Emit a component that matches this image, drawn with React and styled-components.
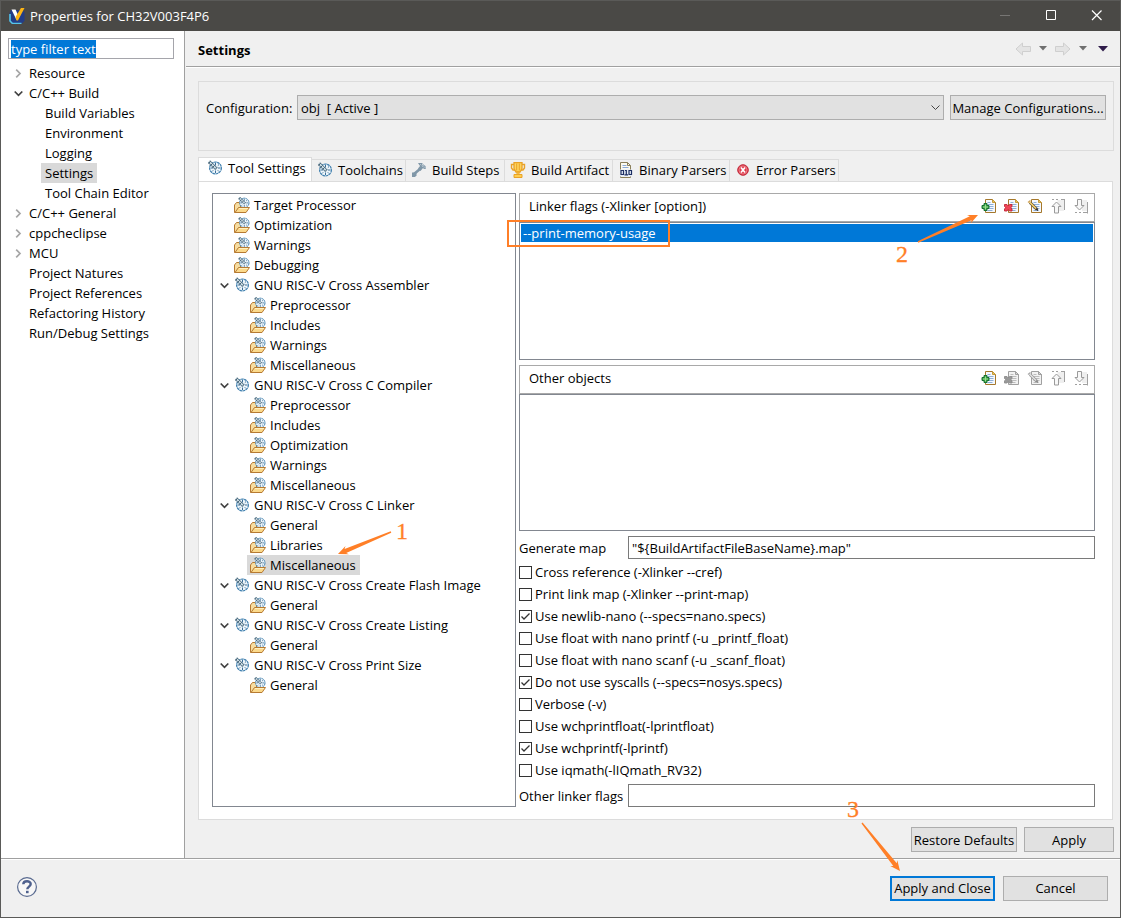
import React, { useEffect, useRef } from "react";
import styled, { createGlobalStyle, css } from "styled-components";

const Global = createGlobalStyle`
  * { box-sizing: border-box; }
  body { margin: 0; background: #f0f0f0; }
  body, button, input, select {
    font-family: "Open Sans", "Noto Sans", "Noto Sans CJK SC", sans-serif;
    font-size: 13px;
    line-height: 20px;
    color: #000;
  }
  ul { list-style: none; margin: 0; padding: 0; }
`;

const Window = styled.div`
  display: flex;
  flex-direction: column;
  min-height: 100vh;
  border: 1px solid #5a5a58;
  background: #f0f0f0;
`;

const TitleBar = styled.header`
  display: flex;
  align-items: center;
  height: 30px;
  padding: 0 15px 0 8px;
  background: #4a4946;
  color: #fff;
`;
const WindowTitle = styled.span`
  flex: 1;
  margin-left: 5px;
`;
const WindowButtons = styled.div`
  display: flex;
  gap: 30px;
`;
const IconButton = styled.button`
  display: flex;
  padding: 0;
  border: 0;
  background: none;
`;

const Columns = styled.div`
  display: flex;
  flex: 1;
`;
const Sidebar = styled.nav`
  flex: 0 0 184px;
  padding: 7px 10px 0 7px;
  border-right: 1px solid #a0a0a0;
  background: #fff;
`;
const FilterInput = styled.input`
  display: block;
  width: 100%;
  height: 21px;
  margin-bottom: 4px;
  padding: 0 2px;
  border: 1px solid #a5a5ab;
  line-height: 17px;
  outline: 0;
  &::selection { background: #0078d7; color: #fff; }
`;

const Row = styled.li`
  display: flex;
  align-items: center;
  height: 20px;
  padding-left: ${(p) => p.$indent}px;
  white-space: nowrap;
`;
const Twisty = styled.span`
  display: flex;
  flex: 0 0 ${(p) => p.$width}px;
`;
const RowLabel = styled.span`
  display: flex;
  align-items: center;
  gap: 4px;
  height: 20px;
  padding: 0 4px 0 ${(p) => (p.$icon ? 3 : 4)}px;
  background: ${(p) => (p.$selected ? "#d9d9d9" : "transparent")};
`;

const Main = styled.main`
  display: flex;
  flex: 1;
  flex-direction: column;
  min-width: 0;
`;
const PageHeader = styled.div`
  display: flex;
  align-items: center;
  justify-content: space-between;
  height: 36px;
  padding: 0 11px 0 12px;
  border-bottom: 1px solid #a0a0a0;
  margin-left: 1px;
  box-shadow: 0 1px 0 #fff;
`;
const PageTitle = styled.h1`
  margin: 2px 0 0;
  font-size: 13px;
  line-height: 20px;
`;
const History = styled.div`
  display: flex;
  align-items: center;
  gap: 8px;
`;
const Content = styled.div`
  display: flex;
  flex: 1;
  flex-direction: column;
  padding: 14px 6px 6px 13px;
`;
const ConfigBox = styled.section`
  display: flex;
  align-items: flex-start;
  height: 70px;
  padding: 13px 7px 0 7px;
  border: 1px solid #dcdcdc;
`;
const ConfigLabel = styled.label`
  flex: 0 0 91px;
  margin-top: 3px;
`;
const SelectWrap = styled.div`
  position: relative;
  flex: 1;
  margin-right: 6px;
`;
const Select = styled.select`
  appearance: none;
  display: block;
  width: 100%;
  height: 25px;
  padding: 0 24px 0 3px;
  border: 1px solid #adadad;
  border-radius: 0;
  background: #e1e1e1;
`;
const SelectArrow = styled.span`
  position: absolute;
  top: 9px;
  right: 4px;
  display: flex;
  pointer-events: none;
`;
const Button = styled.button`
  width: ${(p) => p.$width}px;
  height: 25px;
  padding: 0;
  border: ${(p) => (p.$primary ? "2px solid #0078d7" : "1px solid #adadad")};
  background: #e1e1e1;
  line-height: 20px;
  white-space: nowrap;
`;

const Tabs = styled.div`
  display: flex;
  align-items: flex-end;
  height: 25px;
  margin-top: 6px;
`;
const Tab = styled.button`
  display: flex;
  align-items: center;
  gap: 5px;
  width: ${(p) => p.$width}px;
  height: 23px;
  padding: 0 0 1px 5px;
  border: 1px solid #dcdcdc;
  border-left: 0;
  background: #f0f0f0;
  white-space: nowrap;
  ${(p) =>
    p.$active &&
    css`
      height: 25px;
      padding: 0 0 3px 8px;
      border-left: 1px solid #dcdcdc;
      border-bottom-color: #fff;
      background: #fff;
    `}
`;
const TabPanel = styled.section`
  display: flex;
  flex: 1;
  gap: 3px;
  margin: -1px 1px 7px 0;
  padding: 11px 17px 12px 13px;
  border: 1px solid #dcdcdc;
  background: #fff;
`;
const ToolTree = styled.ul`
  position: relative;
  flex: 0 0 304px;
  && { padding: 1px 0 0 7px; }
  border: 1px solid #828790;
`;
const Options = styled.div`
  display: flex;
  flex: 1;
  flex-direction: column;
  min-width: 0;
`;
const ListHeader = styled.div`
  display: flex;
  align-items: center;
  justify-content: space-between;
  height: 29px;
  padding: 0 5px 4px 9px;
  border: 1px solid #a9a9a9;
  border-bottom: 0;
`;
const Toolbar = styled.div`
  display: flex;
  gap: 7px;
`;
const ListBox = styled.ul`
  position: relative;
  flex: 1 1 137px;
  && { padding: 1px; margin-bottom: 5px; }
  border: 1px solid #828790;
  box-shadow: 0 -1px 0 #a9a9a9;
`;
const ListItem = styled.li`
  height: 18px;
  padding-left: 2px;
  line-height: 18px;
  background: #0078d7;
  color: #fff;
`;
const Field = styled.div`
  display: flex;
  align-items: center;
  label { flex: 0 0 109px; }
`;
const TextInput = styled.input`
  flex: 1;
  min-width: 0;
  height: 23px;
  padding: 0 3px;
  border: 1px solid #7a7a7a;
  outline: 0;
`;
const Checks = styled.div`
  display: flex;
  flex-direction: column;
  margin: 2px 0 3px;
`;
const CheckLabel = styled.label`
  display: flex;
  align-items: center;
  gap: 3px;
  height: 22px;
`;
const tick = encodeURIComponent(
  '<svg xmlns="http://www.w3.org/2000/svg" width="11" height="11"><path d="M1.5 5.5l2.5 2.5 5.500-5.500" fill="none" stroke="#333" stroke-width="1.300"/></svg>'
);
const CheckBox = styled.input`
  appearance: none;
  width: 13px;
  height: 13px;
  margin: 0;
  border: 1px solid #333;
  background: #fff;
  &:checked { background-image: url("data:image/svg+xml,${tick}"); }
`;

const PageActions = styled.div`
  display: flex;
  justify-content: flex-end;
  gap: 7px;
`;
const Footer = styled.footer`
  display: flex;
  align-items: center;
  gap: 8px;
  height: 59px;
  padding: 0 12px 0 15px;
  border-top: 1px solid #a0a0a0;
  box-shadow: inset 0 1px 0 #fff;
`;
const HelpButton = styled(IconButton)`
  margin-right: auto;
`;
const FooterButton = styled.div`
  position: relative;
  display: flex;
`;

const Callout = styled.div`
  position: absolute;
  z-index: 2;
  left: ${(p) => p.$x}px;
  top: ${(p) => p.$y}px;
  ${(p) => p.$right !== undefined && css`left: auto; right: ${p.$right}px;`}
  width: ${(p) => p.$w}px;
  height: ${(p) => p.$h}px;
  pointer-events: none;
  svg { position: absolute; inset: 0; }
`;
const CalloutNumber = styled.span`
  position: absolute;
  left: ${(p) => p.$x}px;
  top: ${(p) => p.$y}px;
  color: #ff7f27;
  font: 24px/24px "Liberation Serif", serif;
  -webkit-text-stroke: 0.3px #ff7f27;
`;
const Highlight = styled.div`
  position: absolute;
  left: -13px;
  top: -3px;
  width: 163px;
  height: 27px;
  border: 2px solid #ff7f27;
  pointer-events: none;
`;

const Arrow = ({ w, h, from, to }) => {
  const dx = to[0] - from[0];
  const dy = to[1] - from[1];
  const len = Math.hypot(dx, dy);
  const u = [dx / len, dy / len];
  const p = (back, side) =>
    `${to[0] - u[0] * back - u[1] * side},${to[1] - u[1] * back + u[0] * side}`;
  return (
    <svg width={w} height={h} aria-hidden="true">
      <polygon
        fill="#ff7f27"
        points={[p(0, 0), p(10, 4.5), p(8, 2.2), p(len, 0.7), p(len, -0.7), p(8, -2.2), p(10, -4.5)].join(" ")}
      />
    </svg>
  );
};

const Svg = ({ children, w = 16, h = 16 }) => (
  <svg width={w} height={h} viewBox={`0 0 ${w} ${h}`} fill="none" aria-hidden="true">
    {children}
  </svg>
);

const DialShape = () => (
  <>
    <circle cx="8.500" cy="8" r="5.900" fill="#eef6fb" stroke="#3f7fae" strokeWidth="1.200" strokeDasharray="2.700 .5" />
    <path d="M8.500 3v2.500M13.500 8h-2.500M8.500 13v-2.500M3.500 8h2.500M12 4.500l-1.200 1.200M5 11.500l1.200-1.200M12 11.500l-1.200-1.200" stroke="#3c6f98" />
    <path d="M2 1.500l7.500 7.500" stroke="#5f7f92" strokeWidth="3.200" />
    <path d="M2.300 1.800L9.500 9" stroke="#dceaf0" strokeWidth="1.300" />
    <path d="M3.500 1.500l-2 2M5.500 3.500l-2 2M7.500 5.500l-2 2M8.500 9l1.500-1.500" stroke="#2d475a" strokeWidth=".8" />
  </>
);
const DialIcon = () => <Svg><DialShape /></Svg>;
const FolderIcon = () => (
  <Svg>
    <path d="M.5 15.500V8l2-2.500h3l1 1.500v4L3 15.500z" fill="#f7dda0" stroke="#b67a32" />
    <g transform="translate(3.500 -.5) scale(.8)"><DialShape /></g>
    <path d="M1 15.500l3.500-5h11l-3.500 5z" fill="#fbd98b" stroke="#b67a32" />
    <path d="M5 11.500h9" stroke="#fff0bd" />
  </Svg>
);
const HammerIcon = () => (
  <Svg>
    <path d="M3 12l6-5" stroke="#8097a8" strokeWidth="2.600" />
    <path d="M1 10.500h4.500v3L4 15H1z" fill="#8097a8" />
    <path d="M7 1h4l1.500 1.500L15 4.500V7h-2l-1-1-2.500 3L7 6.500 9 4z" fill="#8097a8" />
    <path d="M9.500 2.500l5 4M11 2l4 3.500" stroke="#e9eef1" strokeDasharray="1 1" />
  </Svg>
);
const TrophyIcon = () => (
  <Svg>
    <path d="M4 2.500H1.500V6l1.500 2h2M12 2.500h2.500V6L13 8h-2" stroke="#e9a227" strokeWidth="1.400" />
    <path d="M4 .7h8v6L10 10H6L4 6.700z" fill="#ffd45c" stroke="#e9a227" strokeWidth="1.300" />
    <path d="M6.700 1.500v7M9.300 1.500v7" stroke="#e9a227" />
    <path d="M7 10h2v2.500H7z" fill="#ffd45c" stroke="#e9a227" />
    <path d="M4 12.500h8v3H4z" fill="#ffcd4d" stroke="#e9a227" />
  </Svg>
);
const BinaryIcon = () => (
  <Svg>
    <path d="M2.500 8V.5h7l3 3V15.500h-10V14" fill="#fbfaf0" stroke="#8a7f5a" />
    <path d="M9.500.5v3h3" stroke="#8a7f5a" />
    <path d="M4.500 3.500h4M4.500 5.500h6" stroke="#8aa9d8" />
    <path d="M2 7.500h12v7H2z" fill="#e4ebf6" />
    <path d="M3 8.500h2.500v4H3zM11 8.500h2.500v4H11zM7 8.500h1.300V13M6.500 12.800h3.500" stroke="#1d2f63" strokeWidth="1.200" />
  </Svg>
);
const ErrorIcon = () => (
  <Svg>
    <circle cx="8" cy="8" r="5.300" fill="#dd3a4b" stroke="#c02c3c" />
    <circle cx="8" cy="8" r="4" stroke="#f18b93" strokeWidth=".8" />
    <path d="M6 5.500l4 5M10 5.500l-4 5" stroke="#fff" strokeWidth="1.700" />
  </Svg>
);

const PageShape = ({ off }) => (
  <>
    <path d="M4.500 1.500h7l3 3v10h-10z" fill={off ? "#f2f2f2" : "#f5f9ff"} stroke={off ? "#a0a0a0" : "#a5782d"} />
    <path d="M11.500 1.500v3h3z" fill={off ? "#d8d8d8" : "#eac65d"} stroke={off ? "#a0a0a0" : "#c49a3c"} />
    <path d="M6.500 4.500h3M6.500 6.500h6M6.500 8.500h6M6.500 10.500h6M6.500 12.500h5" stroke={off ? "#bdbdbd" : "#8fb0d9"} />
  </>
);
const AddIcon = () => (
  <Svg>
    <PageShape />
    <path d="M3 5.500h3v2h2v3H6v2H3v-2H1v-3h2z" fill="#3da14b" stroke="#187331" />
    <path d="M4.500 6.500v5M2 9h5" stroke="#9be08e" />
  </Svg>
);
const DeleteIcon = ({ off }) => (
  <Svg>
    <PageShape off={off} />
    <path
      d="M.5 6.500h2.500l1.200 1.500 1.300-1.500H8v2L6.800 9.700 8 11v2H5.500l-1.300-1.500L3 13H.5v-2l1.200-1.300L.5 8.500z"
      fill={off ? "#999" : "#ee4656"}
      stroke={off ? "#8d8d8d" : "#c22537"}
      strokeWidth=".9"
    />
  </Svg>
);
const EditIcon = ({ off }) => (
  <Svg>
    <PageShape off={off} />
    <path d="M3 4.500l7 7" stroke={off ? "#929292" : "#5b4f38"} strokeWidth="3" />
    <path d="M2.500 4l6.500 6.500" stroke={off ? "#ddd" : "#f4cf6c"} strokeWidth="1.700" />
    <path d="M1 4.500l2.500-2" stroke={off ? "#aaa" : "#cda25d"} strokeWidth="1.400" />
    <path d="M9.500 11l1.500 1.500" stroke={off ? "#888" : "#222"} strokeWidth="1.400" />
  </Svg>
);
const MoveIcon = ({ down }) => (
  <Svg>
    <path d="M7 2h7v11H9V7z" fill="#efefef" />
    <path d={down ? "M2 14.500h2M6 14.500h2M14.500 4v11.500M10 14.500h4" : "M2 1.500h2M6 1.500h2M14.500 1v11M11 1.500h3"} stroke="#a0a0a0" />
    <path
      d={down ? "M4.500 1.500h4v6h2.500L6.500 12 2 7.500h2.500z" : "M4.500 15V8.500H2L6.500 4l4.500 4.500H8.500V15z"}
      fill="#f8f8f8"
      stroke="#9a9a9a"
    />
  </Svg>
);

const AppIcon = () => (
  <Svg>
    <path d="M2 2h11l2.500 2v9L13 15.500H3L.5 13V5z" fill="#233d86" />
    <path d="M1 6v7l2.500 2.500h9" stroke="#56c5e8" strokeWidth="1.600" />
    <path d="M2.500 1.500h4L9 7l-1.500 5z" fill="#fff" />
    <path d="M7.500 12.500L6.500 9 12 0h3.500L9 12.500z" fill="#fdb515" />
  </Svg>
);
const HelpIcon = () => (
  <Svg w={22} h={22}>
    <circle cx="11" cy="10" r="9.400" fill="#f7f7f7" stroke="#5a6b90" strokeWidth="1.200" />
    <path d="M7.300 7.300C7.300 3.300 14.700 3.300 14.700 7c0 2.600-3.400 2.600-3.400 5.300" stroke="#4f618e" strokeWidth="2.400" />
    <path d="M10 13.800h2.600v2.400H10z" fill="#4f618e" />
  </Svg>
);
const Chevron = ({ open }) => (
  <Svg w={9} h={9}>
    {open ? (
      <path d="M.7 2.500l3.800 3.800 3.800-3.800" stroke="#404040" strokeWidth="1.700" />
    ) : (
      <path d="M2.200.7L6 4.500 2.200 8.300" stroke="#a6a6a6" strokeWidth="1.700" />
    )}
  </Svg>
);
const HistoryArrow = ({ forward }) => (
  <Svg>
    <path
      d={forward ? "M.5 5.500h8V2l6.500 6-6.500 6v-3.500h-8z" : "M15.500 5.500h-8V2L1 8l6.500 6v-3.500h8z"}
      fill="#e4e4e4"
      stroke="#cfcfcf"
    />
  </Svg>
);
const Triangle = ({ color }) => (
  <Svg w={8} h={5}><path d="M0 0h8L4 4.500z" fill={color} /></Svg>
);

const NAV = [
  ["Resource", "closed"],
  ["C/C++ Build", "open"],
  ["Build Variables", "child"],
  ["Environment", "child"],
  ["Logging", "child"],
  ["Settings", "child", true],
  ["Tool Chain Editor", "child"],
  ["C/C++ General", "closed"],
  ["cppcheclipse", "closed"],
  ["MCU", "closed"],
  ["Project Natures", "leaf"],
  ["Project References", "leaf"],
  ["Refactoring History", "leaf"],
  ["Run/Debug Settings", "leaf"],
];

const TOOLS = [
  { name: "Target Processor" },
  { name: "Optimization" },
  { name: "Warnings" },
  { name: "Debugging" },
  { name: "GNU RISC-V Cross Assembler", items: ["Preprocessor", "Includes", "Warnings", "Miscellaneous"] },
  { name: "GNU RISC-V Cross C Compiler", items: ["Preprocessor", "Includes", "Optimization", "Warnings", "Miscellaneous"] },
  { name: "GNU RISC-V Cross C Linker", items: ["General", "Libraries", "Miscellaneous"] },
  { name: "GNU RISC-V Cross Create Flash Image", items: ["General"] },
  { name: "GNU RISC-V Cross Create Listing", items: ["General"] },
  { name: "GNU RISC-V Cross Print Size", items: ["General"] },
];

const TABS = [
  ["Tool Settings", DialIcon, 114],
  ["Toolchains", DialIcon, 94],
  ["Build Steps", HammerIcon, 99],
  ["Build Artifact", TrophyIcon, 108],
  ["Binary Parsers", BinaryIcon, 117],
  ["Error Parsers", ErrorIcon, 109],
];

const CHECKS = [
  ["Cross reference (-Xlinker --cref)", false],
  ["Print link map (-Xlinker --print-map)", false],
  ["Use newlib-nano (--specs=nano.specs)", true],
  ["Use float with nano printf (-u _printf_float)", false],
  ["Use float with nano scanf (-u _scanf_float)", false],
  ["Do not use syscalls (--specs=nosys.specs)", true],
  ["Verbose (-v)", false],
  ["Use wchprintfloat(-lprintfloat)", false],
  ["Use wchprintf(-lprintf)", true],
  ["Use iqmath(-lIQmath_RV32)", false],
];

const ListTools = ({ off }) => (
  <Toolbar>
    <IconButton aria-label="Add"><AddIcon /></IconButton>
    <IconButton aria-label="Delete"><DeleteIcon off={off} /></IconButton>
    <IconButton aria-label="Edit"><EditIcon off={off} /></IconButton>
    <IconButton aria-label="Move up"><MoveIcon /></IconButton>
    <IconButton aria-label="Move down"><MoveIcon down /></IconButton>
  </Toolbar>
);

export default function App() {
  const filter = useRef(null);
  useEffect(() => {
    filter.current.focus();
    filter.current.select();
  }, []);

  return (
    <Window>
      <Global />
      <TitleBar>
        <AppIcon />
        <WindowTitle>Properties for CH32V003F4P6</WindowTitle>
        <WindowButtons>
          <IconButton aria-label="Minimize"><Svg><path d="M3 7.500h10" stroke="#777674" /></Svg></IconButton>
          <IconButton aria-label="Maximize"><Svg><path d="M3.500 2.500h9v9h-9z" stroke="#fff" /></Svg></IconButton>
          <IconButton aria-label="Close"><Svg><path d="M3 2.500l9.500 9.500M12.500 2.500L3 12" stroke="#fff" strokeWidth="1.200" /></Svg></IconButton>
        </WindowButtons>
      </TitleBar>

      <Columns>
        <Sidebar>
          <FilterInput ref={filter} aria-label="Filter" defaultValue="type filter text" />
          <ul>
            {NAV.map(([name, kind, selected]) => (
              <Row key={name} $indent={kind === "child" ? 16 : 0}>
                <Twisty $width={17}>
                  {(kind === "open" || kind === "closed") && (
                    <Svg w={16} h={9}><g transform="translate(6 0)"><Chevron open={kind === "open"} /></g></Svg>
                  )}
                </Twisty>
                <RowLabel $selected={selected}>{name}</RowLabel>
              </Row>
            ))}
          </ul>
        </Sidebar>

        <Main>
          <PageHeader>
            <PageTitle>Settings</PageTitle>
            <History>
              <IconButton aria-label="Back"><HistoryArrow /></IconButton>
              <Triangle color="#6f6f6f" />
              <IconButton aria-label="Forward"><HistoryArrow forward /></IconButton>
              <Triangle color="#6f6f6f" />
              <Svg w={14} h={6}><path d="M3 0h10L8 5.500z" fill="#2f1c4a" /></Svg>
            </History>
          </PageHeader>

          <Content>
            <ConfigBox>
              <ConfigLabel htmlFor="configuration">Configuration:</ConfigLabel>
              <SelectWrap>
                <Select id="configuration">
                  <option>{"obj\u00a0 [ Active ]"}</option>
                </Select>
                <SelectArrow>
                  <Svg w={9} h={7}><path d="M.5 1.500l4 4 4-4" stroke="#444" /></Svg>
                </SelectArrow>
              </SelectWrap>
              <Button $width={156}>Manage Configurations...</Button>
            </ConfigBox>

            <Tabs role="tablist">
              {TABS.map(([name, Icon, width], i) => (
                <Tab key={name} role="tab" aria-selected={i === 0} $active={i === 0} $width={width}>
                  <Icon />
                  {name}
                </Tab>
              ))}
            </Tabs>

            <TabPanel>
              <ToolTree>
                {TOOLS.map((tool) => (
                  <React.Fragment key={tool.name}>
                    <Row $indent={0}>
                      <Twisty $width={11}>{tool.items && <Chevron open />}</Twisty>
                      <RowLabel $icon>
                        {tool.items ? <DialIcon /> : <FolderIcon />}
                        {tool.name}
                      </RowLabel>
                    </Row>
                    {tool.items?.map((item) => (
                      <Row key={item} $indent={27}>
                        <RowLabel
                          $icon
                          $selected={tool.name.endsWith("Linker") && item === "Miscellaneous"}
                        >
                          <FolderIcon />
                          {item}
                        </RowLabel>
                      </Row>
                    ))}
                  </React.Fragment>
                ))}
                <Callout $x={123} $y={324} $w={74} $h={40}>
                  <Arrow w={74} h={40} from={[55, 14]} to={[2, 36]} />
                  <CalloutNumber $x={60} $y={1}>1</CalloutNumber>
                </Callout>
              </ToolTree>

              <Options>
                <ListHeader>
                  <span>Linker flags (-Xlinker [option])</span>
                  <ListTools />
                </ListHeader>
                <ListBox>
                  <ListItem>--print-memory-usage</ListItem>
                  <Highlight />
                  <Callout $right={114} $y={-9} $w={86} $h={54}>
                    <Arrow w={86} h={54} from={[24, 28]} to={[84, 1]} />
                    <CalloutNumber $x={2} $y={28}>2</CalloutNumber>
                  </Callout>
                </ListBox>
                <ListHeader>
                  <span>Other objects</span>
                  <ListTools off />
                </ListHeader>
                <ListBox />

                <Field>
                  <label htmlFor="map">Generate map</label>
                  <TextInput id="map" defaultValue={'"${BuildArtifactFileBaseName}.map"'} />
                </Field>
                <Checks>
                  {CHECKS.map(([name, checked]) => (
                    <CheckLabel key={name}>
                      <CheckBox type="checkbox" defaultChecked={checked} />
                      {name}
                    </CheckLabel>
                  ))}
                </Checks>
                <Field>
                  <label htmlFor="flags">Other linker flags</label>
                  <TextInput id="flags" />
                </Field>
              </Options>
            </TabPanel>

            <PageActions>
              <Button $width={106}>Restore Defaults</Button>
              <Button $width={90}>Apply</Button>
            </PageActions>
          </Content>
        </Main>
      </Columns>

      <Footer>
        <HelpButton aria-label="Help"><HelpIcon /></HelpButton>
        <FooterButton>
          <Button $width={105} $primary>Apply and Close</Button>
          <Callout $x={-46} $y={-81} $w={60} $h={80}>
            <Arrow w={60} h={80} from={[18, 28]} to={[56, 76]} />
            <CalloutNumber $x={3} $y={2}>3</CalloutNumber>
          </Callout>
        </FooterButton>
        <Button $width={105}>Cancel</Button>
      </Footer>
    </Window>
  );
}
